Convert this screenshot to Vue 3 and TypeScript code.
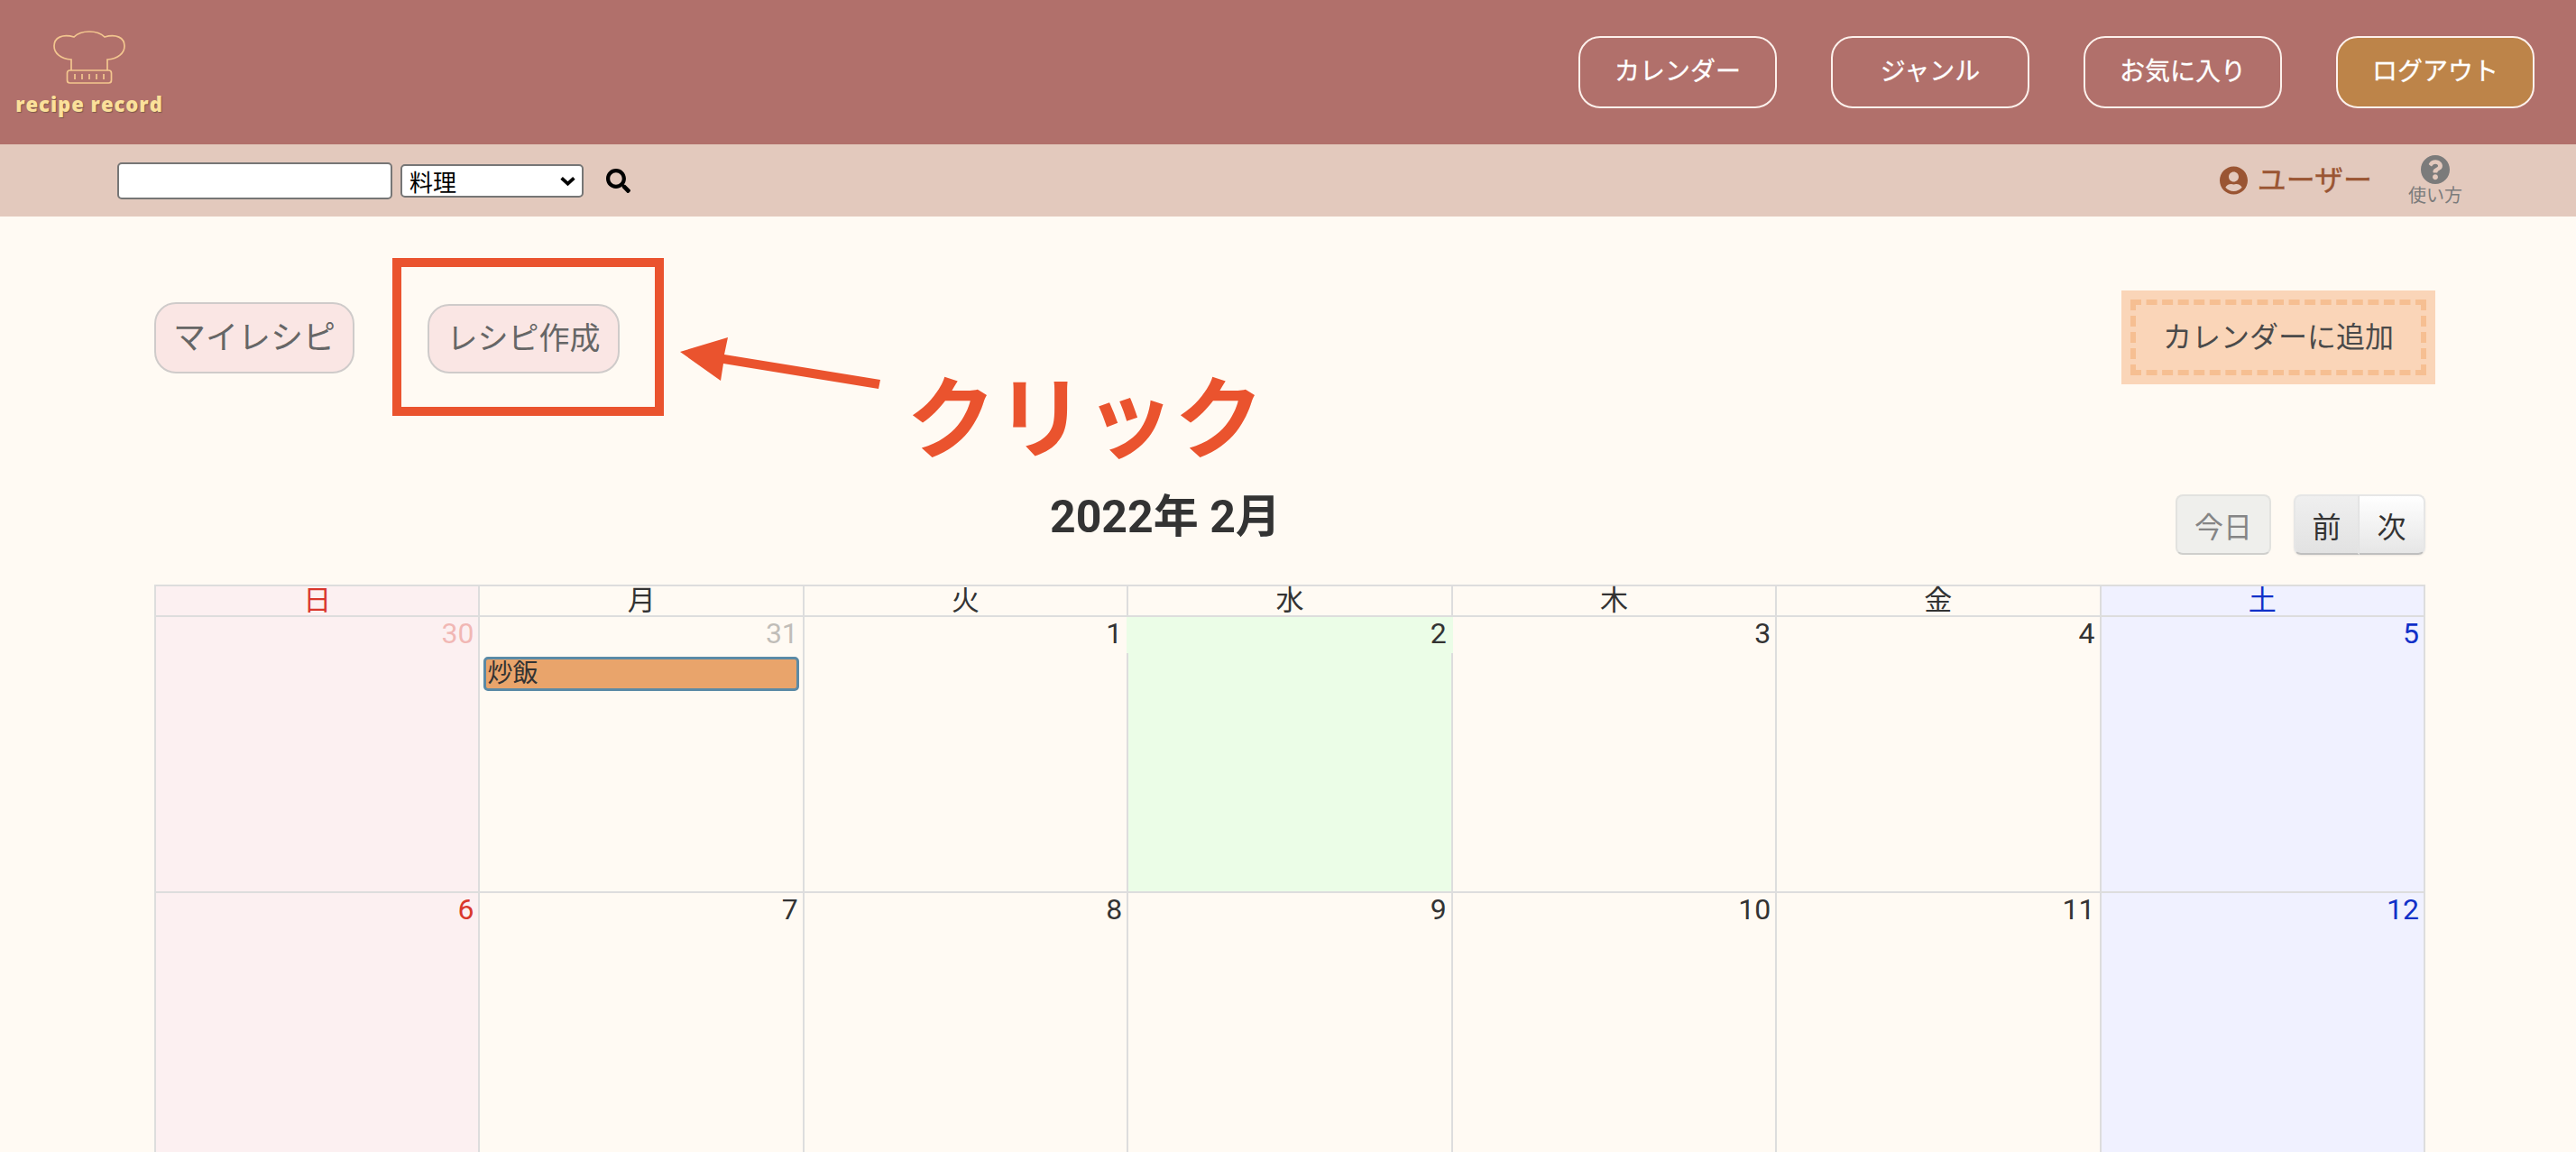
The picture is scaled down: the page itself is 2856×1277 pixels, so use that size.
<script setup lang="ts">
interface Day {
  n: number
  kind: 'sun' | 'sat' | 'week'
  other?: boolean
  today?: boolean
  event?: string
}

const navItems: string[] = ['カレンダー', 'ジャンル', 'お気に入り']
const weekdays = [
  { label: '日', kind: 'sun' },
  { label: '月', kind: 'week' },
  { label: '火', kind: 'week' },
  { label: '水', kind: 'week' },
  { label: '木', kind: 'week' },
  { label: '金', kind: 'week' },
  { label: '土', kind: 'sat' },
]

const kindOf = (i: number): Day['kind'] => (i === 0 ? 'sun' : i === 6 ? 'sat' : 'week')
const firstRow: number[] = [30, 31, 1, 2, 3, 4, 5]
const days: Day[] = [
  ...firstRow.map((n, i): Day => ({
    n,
    kind: kindOf(i),
    other: i < 2,
    today: n === 2,
    event: n === 31 ? '炒飯' : undefined,
  })),
  ...[6, 7, 8, 9, 10, 11, 12].map((n, i): Day => ({ n, kind: kindOf(i) })),
]
</script>

<template>
  <div class="page">
    <header class="topbar">
      <div class="brand">
        <svg class="hat" viewBox="60 35 80 60" width="80" height="60" fill="none">
          <path d="M80 79V67C68 66 61 60 61 52C61 43 70 38 83 42C87 38 93 36 100 36C107 36 113 38 117 42C130 38 139 43 139 52C139 60 132 66 120 67V79" />
          <rect x="75.5" y="79" width="49" height="14" rx="3" />
          <path d="M84 83V89M92 83V89M100 83V89M108 83V89M116 83V89" />
        </svg>
        <span class="brand-name">recipe record</span>
      </div>
      <nav class="nav">
        <a v-for="item in navItems" :key="item" class="nav-btn">{{ item }}</a>
        <a class="nav-btn logout">ログアウト</a>
      </nav>
    </header>

    <div class="subbar">
      <form class="search" @submit.prevent>
        <input class="search-input" type="text" />
        <span class="select-wrap">
          <select class="search-select">
            <option>料理</option>
          </select>
          <svg class="chevron" viewBox="0 0 20 12" width="19" height="11" fill="none">
            <path d="M2.5 2.5L10 9.5L17.5 2.5" />
          </svg>
        </span>
        <svg class="search-icon" viewBox="0 0 512 512" width="27" height="27">
          <path d="M505 442.7L405.3 343c-4.5-4.5-10.6-7-17-7H372c27.6-35.3 44-79.7 44-128C416 93.1 322.9 0 208 0S0 93.1 0 208s93.1 208 208 208c48.3 0 92.7-16.4 128-44v16.3c0 6.4 2.5 12.5 7 17l99.7 99.7c9.4 9.4 24.6 9.4 33.9 0l28.3-28.3c9.4-9.4 9.4-24.6.1-34zM208 336c-70.7 0-128-57.2-128-128 0-70.7 57.2-128 128-128 70.7 0 128 57.2 128 128 0 70.7-57.2 128-128 128z" />
        </svg>
      </form>
      <div class="account">
        <div class="user">
          <svg viewBox="0 0 496 512" width="31" height="32">
            <path d="M248 8C111 8 0 119 0 256s111 248 248 248 248-111 248-248S385 8 248 8zm0 96c48.6 0 88 39.4 88 88s-39.4 88-88 88-88-39.4-88-88 39.4-88 88-88zm0 344c-58.7 0-111.3-26.6-146.5-68.2 18.8-35.4 55.6-59.8 98.5-59.8 2.4 0 4.8.4 7.1 1.1 13 4.2 26.6 6.9 40.9 6.9 14.3 0 28-2.7 40.9-6.9 2.3-.7 4.7-1.1 7.1-1.1 42.9 0 79.7 24.4 98.5 59.8C359.3 421.4 306.7 448 248 448z" />
          </svg>
          <span>ユーザー</span>
        </div>
        <div class="help">
          <svg viewBox="8 8 496 496" width="32" height="32">
            <path d="M504 256c0 136.997-111.043 248-248 248S8 392.997 8 256C8 119.083 119.043 8 256 8s248 111.083 248 248zM262.655 90c-54.497 0-89.255 22.957-116.549 63.758-3.536 5.286-2.353 12.415 2.715 16.258l34.699 26.31c5.205 3.947 12.621 3.008 16.665-2.122 17.864-22.658 30.113-35.797 57.303-35.797 20.429 0 45.698 13.148 45.698 32.958 0 14.976-12.363 22.667-32.534 33.976C247.128 238.528 216 254.941 216 296v4c0 6.627 5.373 12 12 12h56c6.627 0 12-5.373 12-12v-1.333c0-28.462 83.186-29.647 83.186-106.667 0-58.002-60.165-102-116.531-102zM256 338c-25.365 0-46 20.635-46 46 0 25.364 20.635 46 46 46s46-20.636 46-46c0-25.365-20.635-46-46-46z" />
          </svg>
          <span>使い方</span>
        </div>
      </div>
    </div>

    <main class="content">
      <div class="actions">
        <div class="recipe-actions">
          <button class="pill mine">マイレシピ</button>
          <button class="pill create">レシピ作成</button>
        </div>
        <div class="add-box">
          <div class="add-inner">カレンダーに追加</div>
        </div>
      </div>

      <div class="toolbar">
        <h2 class="title">2022年 2月</h2>
        <div class="tools">
          <button class="fc-btn today-btn">今日</button>
          <div class="fc-group">
            <button class="fc-btn prev">前</button>
            <button class="fc-btn next">次</button>
          </div>
        </div>
      </div>

      <div class="calendar">
        <div class="weekhead">
          <div v-for="w in weekdays" :key="w.label" class="head-cell" :class="w.kind">{{ w.label }}</div>
        </div>
        <div class="weeks">
          <div
            v-for="d in days"
            :key="d.n"
            class="day"
            :class="[d.kind, { today: d.today, other: d.other }]"
          >
            <div class="num"><span>{{ d.n }}</span></div>
            <div v-if="d.event" class="event">{{ d.event }}</div>
          </div>
        </div>
      </div>
    </main>

    <!-- annotations drawn over the page -->
    <div class="note-box"></div>
    <svg class="note-arrow" viewBox="754 374 222 58" width="222" height="58">
      <polygon points="754,390 807,374 803,393 976,421 974,431 802,403 799,422" />
    </svg>
    <div class="note-text">クリック</div>
  </div>
</template>

<style>
html,
body {
  margin: 0;
  background: #fffaf3;
  overflow: hidden;
}
</style>

<style scoped>
.page {
  position: relative;
  height: 100vh;
  overflow: hidden;
  background: #fffaf3;
  color: #333;
  font-family: Roboto, "Noto Sans CJK JP", sans-serif;
}

.topbar {
  height: 160px;
  box-sizing: border-box;
  padding: 0 46px 0 19px;
  display: flex;
  align-items: center;
  justify-content: space-between;
  background: #b1706b;
}
.brand {
  width: 160px;
  display: flex;
  flex-direction: column;
  align-items: center;
  gap: 9px;
  margin-top: 0;
}
.hat {
  display: block;
  stroke: #f3c68f;
  stroke-width: 1.7;
}
.brand-name {
  font-family: "Open Sans", sans-serif;
  font-size: 22px;
  font-weight: 800;
  line-height: 24px;
  letter-spacing: 1px;
  white-space: nowrap;
  color: #fbe09a;
  text-shadow: 1px 1px 1px #7c5a4a;
}
.nav {
  display: flex;
  gap: 60px;
}
.nav-btn {
  width: 220px;
  height: 80px;
  box-sizing: border-box;
  display: flex;
  align-items: center;
  justify-content: center;
  padding-bottom: 6px;
  border: 2px solid #fdf1ec;
  border-radius: 24px;
  color: #fff;
  font-size: 28px;
  font-weight: 400;
  -webkit-text-stroke: 0.3px #fff;
}
.logout {
  background: #bd8449;
}

.subbar {
  height: 80px;
  box-sizing: border-box;
  padding: 0 126px 0 130px;
  display: flex;
  align-items: center;
  justify-content: space-between;
  background: #e3c9bd;
}
.search {
  display: flex;
  align-items: center;
  margin: 0;
}
.search-input {
  width: 305px;
  height: 41px;
  box-sizing: border-box;
  padding: 0;
  border: 2px solid #767676;
  border-radius: 5px;
  background: #fff;
  outline: none;
}
.select-wrap {
  position: relative;
  display: block;
  margin-left: 9px;
  height: 37px;
}
.search-select {
  display: block;
  width: 203px;
  height: 37px;
  box-sizing: border-box;
  padding: 0 0 0 8px;
  border: 2px solid #767676;
  border-radius: 5px;
  background: #fff;
  color: #000;
  font-family: "Noto Sans CJK JP", sans-serif;
  font-size: 26px;
  line-height: 33px;
  appearance: none;
  -webkit-appearance: none;
  outline: none;
}
.chevron {
  position: absolute;
  top: 13px;
  right: 8px;
  stroke: #000;
  stroke-width: 4;
  pointer-events: none;
}
.search-icon {
  margin-left: 25px;
  fill: #000;
}
.account {
  display: flex;
  align-items: center;
  gap: 40px;
}
.user {
  display: flex;
  align-items: center;
  gap: 11px;
  color: #9a5533;
  font-size: 32px;
  font-weight: 400;
  -webkit-text-stroke: 0.4px #9a5533;
  line-height: 40px;
}
.user svg {
  fill: #9a5533;
}
.help {
  width: 60px;
  display: flex;
  flex-direction: column;
  align-items: center;
  color: #7b7b7b;
  font-size: 20px;
  line-height: 26px;
  margin-top: 2px;
}
.help svg {
  fill: #7b7b7b;
}

.content {
  padding: 82px 167px 0 171px;
}
.actions {
  height: 104px;
  display: flex;
  align-items: center;
  justify-content: space-between;
}
.recipe-actions {
  display: flex;
  align-items: flex-end;
  gap: 81px;
}
.pill {
  box-sizing: border-box;
  padding: 0 0 6px;
  border: 2px solid #cfcbca;
  border-radius: 24px;
  background: #fae6e4;
  color: #666;
  font-family: inherit;
}
.mine {
  width: 222px;
  height: 79px;
  font-size: 36px;
}
.create {
  width: 213px;
  height: 77px;
  font-size: 34px;
}
.add-box {
  margin-right: -11px;
  padding: 10px;
  background: #fad5b8;
}
.add-inner {
  width: 328px;
  height: 84px;
  box-sizing: border-box;
  padding-bottom: 6px;
  border: 6px dashed #f6bf92;
  display: flex;
  align-items: center;
  justify-content: center;
  color: #4a4a4a;
  font-size: 32px;
}

.toolbar {
  margin-top: 122px;
  height: 67px;
  display: flex;
  justify-content: space-between;
}
.title {
  margin: 0 0 0 993px;
  font-size: 50px;
  font-weight: 700;
  line-height: 50px;
  color: #333;
}
.tools {
  display: flex;
  gap: 25px;
}
.fc-group {
  display: flex;
}
.fc-btn {
  height: 67px;
  box-sizing: border-box;
  padding: 0;
  border: 2px solid #e6e6e6;
  border-bottom-color: #bfbfbf;
  background: linear-gradient(#fff, #e6e6e6);
  box-shadow: 0 1px 2px rgba(0, 0, 0, 0.08);
  color: #333;
  font-family: inherit;
  font-size: 32px;
}
.today-btn {
  width: 106px;
  border-radius: 8px;
  border-color: #e2e2df;
  border-bottom-color: #cfcfcc;
  background: #efefec;
  box-shadow: none;
  color: #858585;
}
.prev,
.next {
  width: 73px;
}
.prev {
  border-radius: 8px 0 0 8px;
  background: linear-gradient(#efefef, #e2e2e2);
}
.next {
  border-left: 0;
  border-radius: 0 8px 8px 0;
}

.calendar {
  margin-top: 33px;
  border-top: 2px solid #ddd;
  border-right: 2px solid #ddd;
}
.weekhead,
.weeks {
  display: grid;
  grid-template-columns: repeat(7, 1fr);
}
.head-cell {
  height: 34px;
  box-sizing: border-box;
  border-left: 2px solid #ddd;
  border-bottom: 2px solid #ddd;
  text-align: center;
  font-size: 31px;
  line-height: 31px;
  color: #333;
}
.head-cell.sun {
  color: #d9372c;
}
.head-cell.sat {
  color: #1030c8;
}
.sun {
  background: #fcf0f1;
}
.sat {
  background: #f0f1ff;
}
.day {
  height: 306px;
  box-sizing: border-box;
  border-left: 2px solid #ddd;
  border-bottom: 2px solid #ddd;
}
.day.today {
  background: #ebfde7;
}
.num {
  height: 44px;
  box-sizing: border-box;
  padding: 0 5px 0 0;
  text-align: right;
  font-size: 32px;
  line-height: 37px;
  color: #333;
}
.sun .num {
  color: #d9372c;
}
.sat .num {
  color: #1030c8;
}
.other .num span {
  opacity: 0.3;
}
.today .num {
  position: relative;
  z-index: 1;
  height: 40px;
  margin: 0 -2px 4px;
  padding-right: 7px;
  background: #ebfde7;
}
.event {
  height: 38px;
  box-sizing: border-box;
  margin: 0 4px;
  padding-left: 1px;
  border: 3px solid #5b8aa6;
  border-radius: 5px;
  background: #e9a46b;
  color: #333;
  font-size: 28px;
  line-height: 32px;
}

.note-box {
  position: absolute;
  left: 435px;
  top: 286px;
  width: 301px;
  height: 175px;
  box-sizing: border-box;
  border: 10px solid #ea532e;
}
.note-arrow {
  position: absolute;
  left: 754px;
  top: 374px;
  fill: #ea532e;
}
.note-text {
  position: absolute;
  left: 1005px;
  top: 392px;
  font-family: "Noto Sans CJK JP", sans-serif;
  font-size: 99px;
  font-weight: 700;
  line-height: 130px;
  color: #ea532e;
  white-space: nowrap;
}
</style>
